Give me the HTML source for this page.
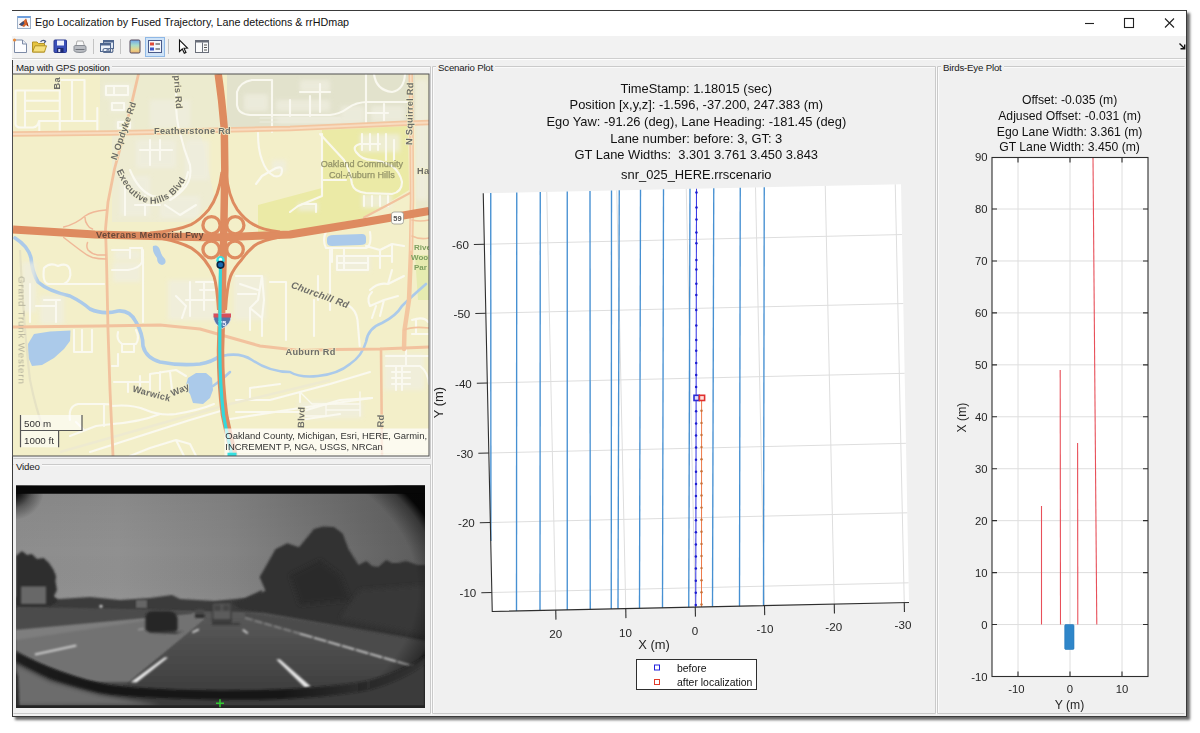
<!DOCTYPE html>
<html lang="en">
<head>
<meta charset="utf-8">
<title>Ego Localization by Fused Trajectory, Lane detections &amp; rrHDmap</title>
<style>
html,body{margin:0;padding:0;background:#fff;}
body{width:1200px;height:733px;position:relative;overflow:hidden;font-family:"Liberation Sans",sans-serif;color:#222;}
#win{position:absolute;left:11.5px;top:10px;width:1173.5px;height:705px;border:1px solid #3a3a3a;background:#f0f0f0;box-shadow:2.500px 2.500px 2.500px rgba(0,0,0,.600);}
#titlebar{position:absolute;left:0;top:0;width:1174px;height:26px;background:#fff;}
#titletext{position:absolute;left:23px;top:5px;font-size:10.75px;line-height:14px;color:#111;white-space:pre;}
#toolbar{position:absolute;left:0;top:26px;width:1174px;height:22px;background:#f1f1f1;border-bottom:1px solid #d0d0d0;}
.abs{position:absolute;}
.ptitle{position:absolute;font-size:9.7px;letter-spacing:-0.2px;line-height:11px;color:#1a1a1a;background:#f0f0f0;padding:0 2px;white-space:pre;}
.panel{position:absolute;border:1px solid #d5d5d5;box-shadow:inset 1px 1px 0 #fff, 1px 1px 0 #fff;}
svg{position:absolute;left:0;top:0;overflow:visible;}
svg text{font-family:"Liberation Sans",sans-serif;}
</style>
</head>
<body>
<div id="win"></div>
<!-- title bar -->
<div class="abs" style="left:12px;top:11px;width:1174px;height:25px;background:#fff;"></div>
<svg width="1200" height="733" viewBox="0 0 1200 733" style="pointer-events:none">
  <!-- app icon -->
  <rect x="17.5" y="16.5" width="13" height="12" fill="#f4f6fa" stroke="#9db0c8" stroke-width="1"/>
  <rect x="17.5" y="16" width="13" height="2" fill="#6f9edb"/>
  <path d="M19 24.5 L23.5 21 L26 18.5 L28.5 26.5 L26 25 L24 27 Z" fill="#d9642a"/>
  <path d="M19 24.5 L23.5 21 L24.5 23.5 L22 26 Z" fill="#3a4f7a"/>
  <path d="M26 18.5 L28.5 26.5 L27 25.5 Z" fill="#8a2f16"/>
  <!-- window controls -->
  <path d="M1085 23.5 H1094" stroke="#222" stroke-width="1.1" fill="none"/>
  <rect x="1124.5" y="18.5" width="9" height="9" stroke="#222" stroke-width="1.1" fill="none"/>
  <path d="M1165 18.5 L1174 27.5 M1174 18.5 L1165 27.5" stroke="#222" stroke-width="1.1" fill="none"/>
</svg>
<div id="titletext" class="abs" style="left:35px;top:15px;">Ego Localization by Fused Trajectory, Lane detections &amp; rrHDmap</div>
<!-- toolbar -->
<div class="abs" style="left:12px;top:36px;width:1174px;height:22px;background:#f2f2f2;border-bottom:1px solid #cfcfcf;"></div>
<div class="abs" style="left:12px;top:59px;width:1174px;height:1px;background:#fdfdfd;"></div>
<svg width="1200" height="733" viewBox="0 0 1200 733" style="pointer-events:none">
  <!-- new file -->
  <path d="M14.5 40 H22.5 L26.5 44 V52.5 H14.5 Z" fill="#fdfdff" stroke="#7d8ba6" stroke-width="1"/>
  <path d="M22.5 40 V44 H26.5" fill="#e8ecf5" stroke="#7d8ba6" stroke-width="1"/>
  <circle cx="14.5" cy="40" r="1.6" fill="#e88a3a"/>
  <!-- open folder -->
  <path d="M32.500 42 H37 L38.500 43.500 H44.500 V52 H32.500 Z" fill="#e6c440" stroke="#b39326" stroke-width="1"/>
  <path d="M32.500 52 L35 45.800 H46.500 L44.500 52 Z" fill="#f5df7c" stroke="#b39326" stroke-width="1"/>
  <path d="M40.500 41.800 Q43 39.300 45.500 41.300 L44.300 43" fill="none" stroke="#4a5a80" stroke-width="1.300"/>
  <!-- save -->
  <rect x="54" y="40" width="12.5" height="12.5" rx="1" fill="#3a4fb8" stroke="#2b3990" stroke-width="1"/>
  <rect x="57" y="40.5" width="7" height="5" fill="#eef1fb"/>
  <rect x="57" y="48" width="6.5" height="4.5" fill="#1d2870"/>
  <rect x="58.3" y="49" width="2" height="3" fill="#dfe3f5"/>
  <!-- print -->
  <path d="M77 41 H83 L84.5 46 H76 Z" fill="#f7f7f7" stroke="#9a9a9a" stroke-width="0.8"/>
  <path d="M74 46.5 Q74 45.5 76 45.5 H84 Q86 45.5 86 47 V50.5 Q86 52.5 80 52.5 Q74 52.5 74 50.5 Z" fill="#b9bcc2" stroke="#80848c" stroke-width="0.9"/>
  <path d="M75.5 49.5 H84.5" stroke="#6f737b" stroke-width="1"/>
  <!-- separator -->
  <path d="M93.5 39 V54" stroke="#c4c4c4" stroke-width="1"/>
  <!-- link plot -->
  <rect x="103.5" y="40.5" width="10" height="8" fill="#dfe8f5" stroke="#4f678f" stroke-width="1"/>
  <rect x="103.5" y="40.5" width="10" height="2" fill="#4f678f"/>
  <rect x="100.5" y="43.5" width="10" height="8" fill="#eef3fa" stroke="#4f678f" stroke-width="1"/>
  <rect x="100.5" y="43.5" width="10" height="2" fill="#4f678f"/>
  <path d="M103 50.5 Q103 48.5 105 48.5 H107 Q109 48.5 109 50.5 Q109 52.5 107 52.5 H105 Q103 52.5 103 50.5 Z M107 50.5 Q107 48.5 109 48.5 H111 Q113 48.5 113 50.5 Q113 52.5 111 52.5 H109 Q107 52.5 107 50.5 Z" fill="none" stroke="#5b6f92" stroke-width="1.1"/>
  <!-- separator -->
  <path d="M120.5 39 V54" stroke="#c4c4c4" stroke-width="1"/>
  <!-- colorbar -->
  <defs><linearGradient id="cbg" x1="0" y1="0" x2="0" y2="1">
    <stop offset="0" stop-color="#6fa4ea"/><stop offset="0.400" stop-color="#a8dcc8"/><stop offset="0.750" stop-color="#ead488"/><stop offset="1" stop-color="#e8b070"/></linearGradient></defs>
  <rect x="130" y="40" width="10" height="13" rx="1.2" fill="url(#cbg)" stroke="#54495a" stroke-width="1"/>
  <!-- legend (selected) -->
  <rect x="145.5" y="37.5" width="19" height="19" fill="#cfe3f7" stroke="#8fb8e6" stroke-width="1"/>
  <rect x="148.500" y="40.5" width="13" height="12" fill="#f4f6fb" stroke="#4a5a8a" stroke-width="1"/>
  <rect x="150" y="42.5" width="4" height="3" fill="#e04a3a"/>
  <rect x="150" y="47.5" width="4" height="3" fill="#3a55c8"/>
  <path d="M155.500 44 H160 M155.500 49 H160" stroke="#333" stroke-width="1.2"/>
  <!-- separator -->
  <path d="M168.500 39 V54" stroke="#c4c4c4" stroke-width="1"/>
  <!-- arrow cursor -->
  <path d="M179.500 40 V51.500 L182.300 49 L184.300 53.300 L186 52.500 L184 48.300 L187.500 48 Z" fill="#fff" stroke="#111" stroke-width="1.1" stroke-linejoin="miter"/>
  <!-- property inspector -->
  <rect x="195.500" y="40.500" width="13" height="12" fill="#fbfbfb" stroke="#6a6f7a" stroke-width="1"/>
  <rect x="195.500" y="40.500" width="13" height="2" fill="#6a6f7a"/>
  <path d="M202.500 42.500 V52.500" stroke="#6a6f7a" stroke-width="1"/>
  <path d="M204 45 H207 M204 47.500 H207 M204 50 H207" stroke="#555" stroke-width="1"/>
  <!-- dock arrow -->
  <path d="M1179.500 43.500 L1184 48 M1184.700 44.500 V48.700 H1180.500" stroke="#111" stroke-width="1.400" fill="none"/>
</svg>
<svg width="1200" height="733" viewBox="0 0 1200 733" style="pointer-events:none">
  <g fill="none" stroke-width="1">
    <!-- etched panel borders: grey line + white highlight -->
    <g stroke="#fafafa">
      <path d="M14.500 67.500 H431.500 V459.500"/>
      <path d="M14.500 465.500 H431.500 V714.500"/>
      <path d="M433.500 714.500 V67.500 H936.500 V714.500"/>
      <path d="M938.500 714.500 V67.500 H1185"/>
    </g>
    <g stroke="#cacaca">
      <path d="M13.500 66.500 H430.500 V458.500 H13.500"/>
      <path d="M13.500 464.500 H430.500 V713.500 H13.500"/>
      <path d="M432.500 713.500 V66.500 H935.500 V713.500 Z"/>
      <path d="M937.500 713.500 V66.500 H1184.500 M937.500 713.500 H1184.500"/>
    </g>
  </g>
</svg>
<div class="ptitle" style="left:14px;top:62px;">Map with GPS position</div>
<div class="ptitle" style="left:14px;top:461px;">Video</div>
<div class="ptitle" style="left:436px;top:62px;">Scenario Plot</div>
<div class="ptitle" style="left:941px;top:62px;">Birds-Eye Plot</div>
<svg width="1200" height="733" viewBox="0 0 1200 733">
<defs>
  <clipPath id="mapclip"><rect x="13" y="74" width="416" height="382"/></clipPath>
  <filter id="pblur" x="-20%" y="-20%" width="140%" height="140%"><feGaussianBlur stdDeviation="2.200"/></filter>
  <filter id="mblur" x="-5%" y="-5%" width="110%" height="110%"><feGaussianBlur stdDeviation="0.45"/></filter>
</defs>
<g clip-path="url(#mapclip)">
<g filter="url(#mblur)">
  <rect x="13" y="74" width="416" height="382" fill="#f3efc9"/>
  <!-- developed / grey areas -->
  <path d="M227 74 H429 V124 L227 130 Z" fill="#e2e2cc"/>
  <path d="M100 74 H214 L221 131 L100 134 Z" fill="#ecebcf"/>
  <path d="M112 134 L200 131 L215 200 L190 222 L112 222 Z" fill="#eeecd2"/>
  <path d="M415 74 H429 V215 H416 Z" fill="#ebe9cc"/>
  <!-- park / campus -->
  <path d="M322 130 L408 126 L409 190 L364 218 L300 230 L258 232 L258 205 L322 188 Z" fill="#ebeaa6"/>
  <path d="M415 255 H429 V300 H418 Z" fill="#e6ebb0"/>
  <!-- water -->
  <g fill="#abcaea">
    <path d="M70.500 330.500 L50 331.500 L34 334 L28 344 L28.500 358 L32 366 L42 365 L54 358 L64 349 L70 341 Z"/>
    <path d="M188 378 L196 373 L206 373 L212 378 L213 390 L210 398 L203 404 L193 403 L190 394 L185 388 Z"/>
    <path d="M327 239 Q327 235 334 235 L362 234 Q366 234 366 238 L366 242 Q366 245 360 245 L332 246 Q327 246 327 242 Z"/>
    <path d="M153 246 Q158 244 160 250 Q161 255 165 259 Q167 264 162 265 Q157 264 157 258 Q152 252 153 246 Z"/>
  </g>
  <g fill="none" stroke="#abcaea" stroke-linecap="round" stroke-linejoin="round">
    <path d="M15 238 Q28 246 31 258 Q32 272 38 282 Q48 291 70 296 Q82 302 90 309 Q103 315 118 311 Q130 310 136 322 Q143 334 143 346 Q146 358 160 362 Q180 366 200 364 Q212 362 220 356" stroke-width="3.600"/>
    <path d="M222 356 Q240 352 252 360 Q270 372 290 372 Q300 378 318 376 Q338 374 350 364 Q362 356 366 342 Q368 328 382 323 Q396 316 402 306 Q410 298 426 284" stroke-width="2.600"/>
    <path d="M213 386 Q222 380 230 372" stroke-width="2.500"/>
  </g>
  <!-- parking lots / building clusters -->
  <g fill="#efeee0" opacity="0.750" filter="url(#pblur)">
    <rect x="244" y="94" width="24" height="17"/><rect x="276" y="100" width="54" height="11"/><rect x="276" y="116" width="68" height="8"/>
    <rect x="341" y="106" width="24" height="18"/><rect x="371" y="106" width="34" height="16"/><rect x="300" y="80" width="30" height="12"/>
    <rect x="104" y="84" width="28" height="14"/><rect x="110" y="100" width="18" height="12"/><rect x="116" y="120" width="16" height="10"/>
    <rect x="136" y="140" width="40" height="28"/><rect x="150" y="100" width="40" height="28"/><rect x="185" y="140" width="24" height="40"/>
    <rect x="120" y="176" width="30" height="40"/><rect x="160" y="196" width="40" height="22"/>
    <rect x="113" y="262" width="28" height="20"/><rect x="114" y="250" width="27" height="10"/>
    <rect x="360" y="134" width="40" height="18"/><rect x="362" y="194" width="30" height="14"/>
    <rect x="272" y="160" width="14" height="12"/><rect x="298" y="203" width="20" height="8"/>
    <rect x="336" y="256" width="34" height="15"/><rect x="384" y="354" width="40" height="36"/>
    <rect x="298" y="402" width="64" height="16"/><rect x="416" y="80" width="12" height="120"/>
    <rect x="22" y="262" width="14" height="50"/><rect x="40" y="296" width="24" height="28"/>
    <rect x="168" y="280" width="48" height="40"/><rect x="234" y="276" width="32" height="44"/>
  </g>
  <!-- local streets -->
  <g fill="none" stroke="#fbfaf2" stroke-width="2.100" stroke-linecap="round" stroke-linejoin="round" opacity="0.930">
    <path d="M15.500 90.500 H59.500 M25 100.700 H59.500 M25 111 H59.500 M25 90.500 V126 M15.500 90.500 V124 Q16 128 22 127.500 H33 Q38 127 39 121 H97.500 M59.800 78 V133 M59.800 80 H84.500 V120 M72 80 V120 M97.300 108 V131 M39.300 121 V133"/>
    <path d="M106 86 H128 V95 H106 Z M114 86 V95 M112 103 H124 V110 H112 Z M118 122 H130 V128 H118 Z"/>
    <path d="M176 74 V100 Q176 120 180 133 Q184 150 190 165 Q192 178 186 186 Q180 194 170 200"/>
    <path d="M130 170 Q138 190 152 196 Q168 200 180 190 Q186 182 188 172"/>
    <path d="M140 150 H172 M150 140 V165 M160 140 V160 M135 205 H160 M145 196 V215 M125 180 V215 M165 205 L180 215 L196 205"/>
    <path d="M252 80 Q240 82 237 92 V105 Q238 114 250 115 H330 Q340 114 348 108 Q356 102 368 102 H408"/>
    <path d="M272 80 V132 M366 74 V125 M252 80 H272 M300 92 H330 M290 100 V116 M310 96 V116 M384 104 V120 M366 113 H388 M320 84 V112"/>
    <path d="M374 74 Q376 90 392 92 Q404 90 405 74"/>
    <path d="M260 118 H340 M260 122 H340" stroke-width="1.100" stroke="#eeeee0"/>
    <path d="M258 133 Q258 150 262 160 Q266 172 274 176 Q282 178 282 170 Q282 166 276 168 L262 176 L256 184"/>
    <path d="M320 134 L344 160 Q350 170 352 184 Q354 192 366 193 L392 194 Q402 192 402 182 Q400 172 392 166 Q380 160 372 160 Q362 160 356 152 Q352 146 360 144 L380 144"/>
    <path d="M322 134 V196 L298 206 L290 212 M322 180 H346 M302 204 L316 204 L316 212"/>
    <path d="M362 134 V150 M370 134 V150 M378 134 V150 M386 134 V160 M394 140 V160"/>
    <path d="M364 196 V206 M372 196 V206 M380 196 V206 M388 196 V206"/>
    <path d="M326 232 Q322 240 326 248 H366 Q372 246 370 232 M332 248 V262 M344 248 V270 M366 246 L380 250 L392 244 L404 246 M392 244 V262 M380 250 V268 M356 256 H392"/>
    <path d="M337 256 H368 V270 H337 Z M337 263 H368"/>
    <path d="M370 290 Q378 282 388 284 L404 276 M372 292 Q366 298 370 306 L384 300 L398 296 M384 300 L380 316 M388 284 L392 270 M376 306 L372 318"/>
    <path d="M412 320 Q424 316 428 322 M412 334 H428 M416 320 V334"/>
    <path d="M196 282 H216 M200 290 H214 M186 300 H214 M190 282 V316 M204 282 V310 M176 296 L186 306 L182 318"/>
    <path d="M236 276 H262 L258 300 L250 308 V330 M240 284 L258 290 M238 294 H256 M262 276 L264 300 L262 318 M270 282 H286 V340 M250 308 L262 318 L262 336"/>
    <path d="M330 250 V310 M318 276 V300 M314 300 V336 M348.500 305.500 Q356 310 357.500 320 L359.700 346"/>
    <path d="M130 248 H142 V262 Q140 268 128 270 H112 M112 250 H130 V258 M143 250 V322"/>
    <path d="M44 268 Q50 262 58 266 Q68 262 70 270 Q72 280 64 284 H48 Q42 282 44 268 M64 284 H104"/>
    <path d="M30 284 V322 M44 300 H60 M56 300 V322 M36 306 H56"/>
    <path d="M74 330 V352 H92 V330 M82 330 V352 M118 332 Q116 340 122 344 H136 Q140 338 136 330 M122 344 V352 H134 V344"/>
    <path d="M112 366 H118 V354 M114 382 H150 M128 382 V392 M140 376 V392 M150 374 V392 M160 372 V390 M170 372 L172 390 M150 374 L176 370 L186 376"/>
    <path d="M70 420 Q68 406 78 404 H104 Q112 404 112 406 M104 404 V426 M112 406 Q132 404 146 410 Q160 416 176 414 Q200 410 214 404"/>
    <path d="M70 436 L96 426 L112 424 Q140 422 160 414 M76 422 L84 430"/>
    <path d="M90 452 L140 436 L190 420 L224 410 M130 456 L150 448 L176 440 L190 444 L196 456 M176 440 L184 456"/>
    <path d="M236 400 H270 L300 392 L330 384 L370 372 M250 400 V388 L280 384 M300 392 V402 M236 412 H300 L340 400 L372 398"/>
    <path d="M300 392 L312 404 H360 M326 404 V416 H300 M360 392 V416 M326 410 H360" stroke-width="1.400"/>
    <path d="M386 356 H428 M386 366 H420 Q428 372 429 384 M406 350 V366 M392 372 H410 M392 378 H410 M392 384 H410 M396 366 V390 M402 366 V390"/>
    <path d="M224 420 L300 408 L372 398 M300 420 L340 414"/>
  </g>
  <!-- rail line (faint) -->
  <path d="M20 250 Q24 330 30 380 Q36 410 44 430" fill="none" stroke="#e6e2c4" stroke-width="2.200"/>
  <path d="M60 452 L230 404 L330 380" fill="none" stroke="#eeead0" stroke-width="2.500"/>
  <!-- minor arterials -->
  <g fill="none" stroke-linecap="round" stroke-linejoin="round">
    <g stroke="#f3c6a0">
      <path d="M13 134 L110 133 L160 132 L222 130 L290 128.500 L400 123.500 L429 122.500" stroke-width="5.500"/>
      <path d="M410.700 74 L411.500 130 L412 200 L411 250 L409 300 Q406 320 404.500 330 L404 349" stroke-width="4.500"/>
    </g>
    <g stroke="#f8dcc0">
      <path d="M13 134 L110 133 L160 132 L222 130 L290 128.500 L400 123.500 L429 122.500" stroke-width="2"/>
      <path d="M410.700 74 L411.500 130 L412 200 L411 250" stroke-width="1.500"/>
    </g>
    <g stroke="#f2c29e">
      <path d="M138.500 74 L131 106 L124 134 L114.500 169 L108 202 L105.500 229 L106.500 260 L108 330 L110 390 L113 456" stroke-width="2.800"/>
      <path d="M13 327 L100 326 L160 325 L200 329 L260 346 L300 350.500 L335 349.500 L380 349 L429 347" stroke-width="3"/>
      <path d="M381 349 L381.500 400 L382 456" stroke-width="2.600"/>
      <path d="M364 217.500 Q386 206 410 193" stroke-width="2"/>
      <path d="M63.700 227 Q76 224 85 216 Q92 211 106 210 M85 217.500 Q85 222 87.500 225 Q89 228 92.500 229 M63.700 237.500 Q72 244 80 250 Q86 255 92.500 257.500 Q98 259 106 259 M87.500 242.500 Q86 247 88 250 Q92 254 97.500 255 L106 255" stroke-width="1.500" stroke="#f0b898"/>
      <path d="M412 220 Q420 222 429 220 M412 236 Q420 240 429 238 M404 330 Q412 326 429 328" stroke-width="1.600"/>
    </g>
  </g>
  <!-- highways -->
  <g fill="none" stroke="#de8b60" stroke-linecap="butt" stroke-linejoin="round">
    <path d="M218.200 74 Q222 100 224.300 129 L224.800 170 L223.700 237 L222 300 L220.500 350 Q220.500 385 224.500 415 Q228 432 234 456" stroke-width="7.500"/>
    <path d="M13 229.400 L95 234.400 L160 236.300 L202 237.300 L224 237.300 L290 234.500 L360 223 L429 211" stroke-width="8"/>
    <!-- cloverleaf loops -->
    <circle cx="211.500" cy="225.200" r="8.600" stroke-width="3.300"/>
    <circle cx="235.300" cy="225.200" r="8.600" stroke-width="3.300"/>
    <circle cx="211.200" cy="249.500" r="8.300" stroke-width="3.300"/>
    <circle cx="235" cy="249.500" r="8.300" stroke-width="3.300"/>
    <!-- outer ramps -->
    <path d="M222 172 Q219 196 208.700 209.600 Q200 220 191 224.600 Q176 231 150 233" stroke-width="3"/>
    <path d="M226 172 Q228 196 237.300 209.600 Q245 220 253.700 224.600 Q262 230 280 232" stroke-width="3"/>
    <path d="M160 238 Q180 242 191 247.800 Q200 254 204.600 260 Q211 268 214 276.400 Q217 286 218.500 310" stroke-width="3"/>
    <path d="M280 237 Q262 240 254 246 Q246 253 241.400 260 Q234 268 230.500 276.400 Q227 286 225.500 310" stroke-width="3"/>
  </g>
</g>
</g>
</svg>
<svg width="1200" height="733" viewBox="0 0 1200 733">
<g clip-path="url(#mapclip)">
 <g filter="url(#mblur)">
  <!-- road labels -->
  <g font-weight="bold" fill="#6d6d68" font-size="9.200" stroke="#f3efc9" stroke-width="1.400" paint-order="stroke" stroke-linejoin="round" letter-spacing="0.300">
    <text x="154" y="134.200">Featherstone Rd</text>
    <text x="96" y="238.300" fill="#6b4a3a" stroke="none">Veterans Memorial Fwy</text>
    <text transform="translate(116.500 160.500) rotate(-71)">N Opdyke Rd</text>
    <text transform="translate(412.200 145) rotate(-89)">N Squirrel Rd</text>
    <text transform="translate(290.500 287.500) rotate(20)" font-style="italic" font-size="9.600">Churchill Rd</text>
    <text x="285.500" y="354.500">Auburn Rd</text>
    <text transform="translate(132 391.500) rotate(15)">Warwick</text>
    <text transform="translate(172.500 396.500) rotate(-24)">Way</text>
    <text transform="translate(60.300 89.500) rotate(-90)">Ba</text>
    <text transform="translate(173.800 75.500) rotate(86)">pris Rd</text>
    <text x="417" y="173.500" >Har</text>
    <text transform="translate(304 428) rotate(-88)">Blvd</text>
    <text transform="translate(383.500 427.500) rotate(-88)">Rd</text>
  </g>
  <!-- curved label: Executive Hills Blvd -->
  <path id="exec" d="M116.500 171 Q132 206 156 203.500 Q180 198 190 169" fill="none"/>
  <text font-weight="bold" fill="#6d6d68" font-size="9.200" stroke="#f1eed0" stroke-width="1.400" paint-order="stroke" letter-spacing="0.350"><textPath href="#exec" startOffset="0">Executive Hills Blvd</textPath></text>
  <g fill="#94946a" font-size="9.100" stroke="#94946a" stroke-width="0.250">
    <text x="320.700" y="167.200">Oakland Community</text>
    <text x="329" y="177.700">Col-Auburn Hills</text>
  </g>
  <g fill="#7fa060" font-size="8" font-weight="bold">
    <text x="414" y="250">Rive</text><text x="411" y="260">Woo</text><text x="414" y="270">Par</text>
  </g>
  <text transform="translate(18.500 276) rotate(90)" fill="#b4b19c" font-size="9.800" letter-spacing="0.800">Grand Trunk Western</text>
  <!-- shields -->
  <rect x="391.500" y="212" width="12" height="12" rx="2.500" fill="#fdfdf8" stroke="#9a9a90" stroke-width="0.800"/>
  <text x="397.500" y="221" font-size="7.500" fill="#555" text-anchor="middle" font-weight="bold">59</text>
  <path d="M213.500 313.500 H231 V316 Q231.500 324 222.300 328.500 Q213 324 213.500 316 Z" fill="#5676a8" stroke="#e8e8ee" stroke-width="0.800"/>
  <path d="M213.500 313.500 H231 V317.500 H213.500 Z" fill="#d8505a"/>
  <text x="222.300" y="326" font-size="7.500" fill="#eef" text-anchor="middle" font-weight="bold">75</text>
 </g>
  <!-- trajectory -->
  <path d="M220.500 262 L220 300 L219.800 350 Q220 385 223.500 415 Q226.500 432 232 456" fill="none" stroke="#33d9dc" stroke-width="3.200" stroke-linecap="butt"/>
  <circle cx="220.500" cy="260.300" r="4.200" fill="#35e0e0"/>
  <circle cx="220.500" cy="259.500" r="1.700" fill="#e8ffff"/>
  <circle cx="220.500" cy="264.800" r="3.300" fill="#1668b0" stroke="#0b2540" stroke-width="1.600"/>
  <!-- attribution -->
  <rect x="224.500" y="428.500" width="205" height="25" fill="#fff" fill-opacity="0.700"/>
  <rect x="224.500" y="453.500" width="205" height="3" fill="#fff" fill-opacity="0.700"/>
  <rect x="227.500" y="452.700" width="9" height="3.300" fill="#35e0e0"/>
  <g font-size="9.450" fill="#333">
    <text x="225.300" y="438.700">Oakland County, Michigan, Esri, HERE, Garmin,</text>
    <text x="225.300" y="450.200">INCREMENT P, NGA, USGS, NRCan</text>
  </g>
  <!-- scale bar -->
  <rect x="20.500" y="415" width="61.500" height="15.500" fill="#fff" fill-opacity="0.600"/>
  <rect x="20.500" y="430.500" width="38" height="16.800" fill="#fff" fill-opacity="0.600"/>
  <path d="M20.500 415 V447.300 M20.500 430.500 H82 V415 M58.600 430.500 V447.300" fill="none" stroke="#555" stroke-width="1.200"/>
  <g font-size="9.800" fill="#333"><text x="24" y="427">500 m</text><text x="24" y="443.500">1000 ft</text></g>
</g>
<rect x="12.500" y="74" width="416.500" height="382" fill="none" stroke="#4f4f4f" stroke-width="1"/>
</svg>
<svg width="1200" height="733" viewBox="0 0 1200 733">
<defs>
  <clipPath id="vidclip"><rect x="16" y="485.500" width="409" height="222.500"/></clipPath>
  <linearGradient id="skyh" x1="16" y1="0" x2="425" y2="0" gradientUnits="userSpaceOnUse">
    <stop offset="0" stop-color="#8d8d8d"/><stop offset="0.250" stop-color="#909090"/><stop offset="0.520" stop-color="#848484"/><stop offset="0.770" stop-color="#707070"/><stop offset="1" stop-color="#5c5c5c"/>
  </linearGradient>
  <linearGradient id="skyv" x1="0" y1="493" x2="0" y2="610" gradientUnits="userSpaceOnUse">
    <stop offset="0" stop-color="#000" stop-opacity="0.050"/><stop offset="0.500" stop-color="#000" stop-opacity="0"/><stop offset="1" stop-color="#fff" stop-opacity="0.050"/>
  </linearGradient>
  <linearGradient id="roadg" x1="0" y1="605" x2="0" y2="700" gradientUnits="userSpaceOnUse">
    <stop offset="0" stop-color="#585858"/><stop offset="0.600" stop-color="#4e4e4e"/><stop offset="1" stop-color="#444"/>
  </linearGradient>
  <linearGradient id="egog" x1="0" y1="612" x2="0" y2="700" gradientUnits="userSpaceOnUse">
    <stop offset="0" stop-color="#5a5a5a"/><stop offset="0.450" stop-color="#4c4c4c"/><stop offset="1" stop-color="#3c3c3c"/>
  </linearGradient>
  <linearGradient id="bandg" x1="16" y1="0" x2="425" y2="0" gradientUnits="userSpaceOnUse">
    <stop offset="0" stop-color="#161616" stop-opacity="0.850"/><stop offset="0.200" stop-color="#161616" stop-opacity="1"/><stop offset="0.650" stop-color="#161616" stop-opacity="1"/><stop offset="0.850" stop-color="#1c1c1c" stop-opacity="0.500"/><stop offset="1" stop-color="#222" stop-opacity="0.300"/>
  </linearGradient>
  <radialGradient id="tlc" cx="14" cy="490" r="30" gradientUnits="userSpaceOnUse">
    <stop offset="0.200" stop-color="#000" stop-opacity="0.850"/><stop offset="0.600" stop-color="#000" stop-opacity="0.350"/><stop offset="1" stop-color="#000" stop-opacity="0"/>
  </radialGradient>
  <radialGradient id="vig" cx="200" cy="590" r="1" gradientUnits="userSpaceOnUse" gradientTransform="translate(200 590) scale(250 170) translate(-200 -590)">
    <stop offset="0.870" stop-color="#000" stop-opacity="0"/><stop offset="0.960" stop-color="#000" stop-opacity="0.400"/><stop offset="1.060" stop-color="#000" stop-opacity="0.930"/>
  </radialGradient>
  <filter id="vb1" x="-5%" y="-5%" width="110%" height="110%"><feGaussianBlur stdDeviation="0.800"/></filter>
  <filter id="vb2" x="-10%" y="-10%" width="120%" height="120%"><feGaussianBlur stdDeviation="2.200"/></filter>
  <filter id="vb3" x="-10%" y="-10%" width="120%" height="120%"><feGaussianBlur stdDeviation="1.300"/></filter>
</defs>
<g clip-path="url(#vidclip)">
  <rect x="16" y="485" width="409" height="223" fill="#0c0c0c"/>
  <!-- sky -->
  <rect x="16" y="493.500" width="409" height="125" fill="url(#skyh)"/>
  <rect x="16" y="493.500" width="409" height="125" fill="url(#skyv)"/>
  <!-- road base -->
  <path d="M16 606 H425 V707 H16 Z" fill="url(#roadg)"/>
  <!-- lighter concrete lanes on left -->
  <path d="M16 628 L146 617 L205 612 L205 619.600 L129.700 682 L16 682 Z" fill="#727272" filter="url(#vb1)"/>
  <path d="M16 629 L146 617.500 L150 620 L16 640 Z" fill="#7e7e7e" filter="url(#vb1)"/>
  <!-- ego lane asphalt -->
  <path d="M205 612 L240 612 L425 672 V707 H100 L129.700 682 L205 619.600 Z" fill="url(#egog)" filter="url(#vb1)"/>
  <!-- right shoulder / verge -->
  <path d="M245 612 L425 640 V668 L245 617 Z" fill="#4c4c4c" filter="url(#vb1)"/>
  <!-- distant tree line -->
  <path d="M16 597 L60 599 L90 597 L120 600 L150 598 L172 595 L180 599 L215 601 L245 598 L262 590 L262 612 L16 609 Z" fill="#3a3a3a" filter="url(#vb1)"/>
  <rect x="136" y="600" width="11" height="8" fill="#666" filter="url(#vb1)"/>
  <!-- barrier wall -->
  <path d="M16 606.700 L146 609.500 L192 611.500 L192 613.500 L146 617.800 L16 629.700 Z" fill="#4b4b4b" filter="url(#vb1)"/>
  <!-- left trees -->
  <path d="M16 556 L21.900 551 L27 555 L31.800 554 L37 559 L43.600 557.900 L49 563 L53.500 569.700 L56 576 L55.500 581.600 L57 590 L54 596 L58 601 L50 606 H16 Z" fill="#2d2d2d" filter="url(#vb3)"/>
  <path d="M21 586.400 H46 V604 H21 Z" fill="#686868" filter="url(#vb1)"/>
  <!-- right trees -->
  <path d="M231.900 602.600 L245.700 598.700 L265.500 590.800 L259.600 577 L266 566 L275.400 549.200 L287.300 543.300 L299 547.300 L307 537.400 L314 529 L322.900 526.500 L334 527 L342.700 533.400 L348.600 549.200 L358.500 565 L366.400 561 L372 566 L378.300 567 L386.200 560 L392 563 L398 563 L406 561 L417.800 565 H426 V641 L265 613 L240 609 Z" fill="#333" filter="url(#vb3)"/>
  <path d="M290 575 L320 560 L340 575 L350 600 L300 605 Z" fill="#2a2a2a" filter="url(#vb2)"/>
  <path d="M360 590 L425 585 V635 L340 618 Z" fill="#393939" filter="url(#vb2)"/>
  <!-- lane markings -->
  <g filter="url(#vb1)">
    <path d="M130.600 682.200 L164.700 657.300 L168 657.600 L136.500 682.400 Z" fill="#ececec"/>
    <path d="M276.300 659.600 L279.800 659.300 L310.800 686.600 L305 687.400 Z" fill="#e8e8e8"/>
    <path d="M34.900 654.600 L76.300 645.400" stroke="#cfcfcf" stroke-width="2" fill="none"/>
    <path d="M192.300 632.500 L198.800 629.400" stroke="#d8d8d8" stroke-width="1.800" fill="none"/>
    <path d="M242.800 629.700 L247.800 633.400" stroke="#d8d8d8" stroke-width="1.800" fill="none"/>
    <path d="M138 629.800 L144 628.700" stroke="#9a9a9a" stroke-width="1.400" fill="none"/>
    <path d="M245 617.800 L300 633.700" stroke="#9a9a9a" stroke-width="1.200" stroke-dasharray="8 2" fill="none"/>
    <path d="M300 633.700 L414.400 666.600" stroke="#d2d2d2" stroke-width="1.700" stroke-dasharray="13 1.500" fill="none"/>
  </g>
  <!-- vehicles -->
  <g filter="url(#vb1)">
    <path d="M146 630 L178 632 L184 631 L176 634 L150 633 Z" fill="#3a3a3a"/>
    <path d="M145.400 617 Q146 612 152 611.300 H170 Q176 612 177.600 618 V629 Q177 631.600 172 631.600 H150 Q145.400 631.600 145.400 628 Z" fill="#282828"/>
    <rect x="195" y="609.500" width="9.800" height="8.300" rx="1.500" fill="#4a4a4a"/>
    <rect x="195" y="614.500" width="9.800" height="3.300" fill="#2c2c2c"/>
    <rect x="211.800" y="602.500" width="20.100" height="21.300" rx="2" fill="#3c3c3c"/>
    <rect x="213.300" y="604" width="17" height="15" rx="1" fill="#5c5c5c"/>
    <rect x="214.300" y="605" width="6.700" height="6" fill="#454545"/>
    <rect x="222.600" y="605" width="6.700" height="6" fill="#454545"/>
    <path d="M212 624 H240" stroke="#333" stroke-width="1.500"/>
    <circle cx="101" cy="606.300" r="1.400" fill="#f4f4f4"/>
  </g>
  <rect x="16" y="485" width="409" height="223" fill="url(#vig)"/>
  <rect x="16" y="490" width="34" height="34" fill="url(#tlc)"/>
  <!-- lens edge / dashboard -->
  <path d="M16 653.700 L46.800 666.500 L83.700 679.400 L107.600 686 L139 688.700 L194 690.500 L260 691 L310 688.700 L357.300 685 L394 674 L414.400 664.700 L425 657.300 V709 H16 Z" fill="#3a3a3a" filter="url(#vb3)"/>
  <path d="M16 651 Q60 676 110 685 Q170 692 260 690 Q330 688 370 680 Q405 670 425 655 L425 664 Q405 680 370 690 Q330 698 260 699.700 Q170 700 110 695 Q60 688 16 662 Z" fill="url(#bandg)" filter="url(#vb3)"/>
  <path d="M16 664 L50 681 L100 695 L160 705 L16 706 Z" fill="#6c6c6c" filter="url(#vb2)"/>
  <path d="M14 668 L18 676 L19.500 710 H14 Z" fill="#2c2c2c" filter="url(#vb3)"/>
  <rect x="16" y="705.300" width="409" height="3" fill="#242424"/>
  <!-- vignette -->
  <rect x="16" y="485.500" width="409" height="8" fill="#070707"/>
  <!-- green plus -->
  <path d="M216 703.300 H224 M220 699.300 V707.300" stroke="#32c832" stroke-width="1.500" fill="none"/>
</g>
</svg>
<svg width="1200" height="733" viewBox="0 0 1200 733">
<polygon points="483.25,193.25 901.0,184.25 909.0,602.5 492.25,611.5" fill="#fff"/>
<g stroke="#dedede" stroke-width="1" fill="none">
<path d="M484.35 244.25 L901.96 234.55"/>
<path d="M485.83 313.25 L903.28 303.55"/>
<path d="M487.33 383.00 L904.62 373.30"/>
<path d="M488.84 453.00 L905.95 443.30"/>
<path d="M490.33 522.50 L907.28 512.80"/>
<path d="M491.84 592.50 L908.62 582.80"/>
<path d="M546.75 191.88 L555.75 610.13"/>
<path d="M616.75 190.37 L625.75 608.62"/>
<path d="M686.25 188.88 L695.25 607.12"/>
<path d="M755.50 187.38 L764.50 605.62"/>
<path d="M825.25 185.88 L834.25 604.11"/>
<path d="M895.25 184.37 L904.25 602.60"/>
</g>
<g stroke="#4690d2" stroke-width="1.35" fill="none">
<path d="M490.75 193.09 L490.9 541"/>
<path d="M516.75 192.53 L516.50 610.98"/>
<path d="M540.25 192.02 L540.00 610.47"/>
<path d="M567.25 191.44 L567.25 609.88"/>
<path d="M590.00 190.95 L590.25 609.38"/>
<path d="M611.50 190.49 L611.25 608.93"/>
<path d="M619.25 190.32 L618.00 608.78"/>
<path d="M640.50 189.86 L639.50 608.32"/>
<path d="M663.50 189.37 L662.50 607.82"/>
<path d="M690.00 188.80 L688.75 607.26"/>
<path d="M713.75 188.28 L712.50 606.74"/>
<path d="M740.25 187.71 L739.50 606.16"/>
<path d="M764.25 187.20 L763.50 605.64"/>
</g>
<path d="M696.5 188.66 L695.75 607.11" stroke="#3a3ae4" stroke-width="1.05" fill="none"/>
<g fill="#1c1cd0">
<circle cx="696.49" cy="192.50" r="1.25"/>
<circle cx="696.47" cy="207.50" r="1.25"/>
<circle cx="696.44" cy="219.50" r="1.25"/>
<circle cx="696.42" cy="232.50" r="1.25"/>
<circle cx="696.40" cy="243.25" r="1.25"/>
<circle cx="696.37" cy="260.00" r="1.25"/>
<circle cx="696.36" cy="269.50" r="1.25"/>
<circle cx="696.33" cy="283.75" r="1.25"/>
<circle cx="696.31" cy="295.00" r="1.25"/>
<circle cx="696.28" cy="310.00" r="1.25"/>
<circle cx="696.25" cy="325.50" r="1.25"/>
<circle cx="696.23" cy="340.00" r="1.25"/>
<circle cx="696.21" cy="350.80" r="1.25"/>
<circle cx="696.19" cy="362.90" r="1.25"/>
<circle cx="696.17" cy="375.00" r="1.25"/>
<circle cx="696.14" cy="387.10" r="1.25"/>
<circle cx="696.12" cy="399.20" r="1.25"/>
<circle cx="696.10" cy="411.30" r="1.25"/>
<circle cx="696.08" cy="423.40" r="1.25"/>
<circle cx="696.06" cy="435.50" r="1.25"/>
<circle cx="696.04" cy="447.60" r="1.25"/>
<circle cx="696.01" cy="459.70" r="1.25"/>
<circle cx="695.99" cy="471.80" r="1.25"/>
<circle cx="695.97" cy="483.90" r="1.25"/>
<circle cx="695.95" cy="496.00" r="1.25"/>
<circle cx="695.93" cy="508.10" r="1.25"/>
<circle cx="695.91" cy="520.20" r="1.25"/>
<circle cx="695.88" cy="532.30" r="1.25"/>
<circle cx="695.86" cy="544.40" r="1.25"/>
<circle cx="695.84" cy="556.50" r="1.25"/>
<circle cx="695.82" cy="568.60" r="1.25"/>
<circle cx="695.80" cy="580.70" r="1.25"/>
<circle cx="695.78" cy="592.80" r="1.25"/>
<circle cx="695.75" cy="604.90" r="1.25"/>
</g>
<path d="M701.6 398 L701.5 606.98" stroke="#ee7a4a" stroke-width="1.0" fill="none"/>
<g fill="#c87038">
<circle cx="701.50" cy="410.80" r="1.2"/>
<circle cx="701.50" cy="422.90" r="1.2"/>
<circle cx="701.50" cy="435.00" r="1.2"/>
<circle cx="701.50" cy="447.10" r="1.2"/>
<circle cx="701.50" cy="459.20" r="1.2"/>
<circle cx="701.50" cy="471.30" r="1.2"/>
<circle cx="701.50" cy="483.40" r="1.2"/>
<circle cx="701.50" cy="495.50" r="1.2"/>
<circle cx="701.50" cy="507.60" r="1.2"/>
<circle cx="701.50" cy="519.70" r="1.2"/>
<circle cx="701.50" cy="531.80" r="1.2"/>
<circle cx="701.50" cy="543.90" r="1.2"/>
<circle cx="701.50" cy="556.00" r="1.2"/>
<circle cx="701.50" cy="568.10" r="1.2"/>
<circle cx="701.50" cy="580.20" r="1.2"/>
<circle cx="701.50" cy="592.30" r="1.2"/>
<circle cx="701.50" cy="604.40" r="1.2"/>
</g>
<rect x="694.0" y="395.300" width="5.200" height="5.200" fill="#dcdcff" stroke="#2a2ad8" stroke-width="1.600"/>
<rect x="699.400" y="395.300" width="5.200" height="5.200" fill="#ffe0dc" stroke="#e03030" stroke-width="1.600"/>
<path d="M483.25 193.25 L492.25 611.5 L909.0 602.5" stroke="#2e2e2e" stroke-width="1.1" fill="none"/>
<g stroke="#2e2e2e" stroke-width="1.1" fill="none">
<path d="M473.85 244.50 L484.35 244.25"/>
<path d="M475.33 313.50 L485.83 313.25"/>
<path d="M476.83 383.25 L487.33 383.00"/>
<path d="M478.34 453.25 L488.84 453.00"/>
<path d="M479.83 522.75 L490.33 522.50"/>
<path d="M481.34 592.75 L491.84 592.50"/>
<path d="M555.75 610.13 L555.95 619.63"/>
<path d="M625.75 608.62 L625.95 618.12"/>
<path d="M695.25 607.12 L695.45 616.62"/>
<path d="M764.50 605.62 L764.70 615.12"/>
<path d="M834.25 604.11 L834.45 613.61"/>
<path d="M904.25 602.60 L904.45 612.10"/>
</g>
<g font-size="11.600" fill="#262626">
<text x="468.85" y="248.75" text-anchor="end">-60</text>
<text x="470.33" y="317.75" text-anchor="end">-50</text>
<text x="471.83" y="387.50" text-anchor="end">-40</text>
<text x="473.34" y="457.50" text-anchor="end">-30</text>
<text x="474.83" y="527.00" text-anchor="end">-20</text>
<text x="476.34" y="597.00" text-anchor="end">-10</text>
<text x="555.75" y="638.20" text-anchor="middle">20</text>
<text x="625.50" y="636.50" text-anchor="middle">10</text>
<text x="695.00" y="635.20" text-anchor="middle">0</text>
<text x="765.00" y="632.80" text-anchor="middle">-10</text>
<text x="833.75" y="631.40" text-anchor="middle">-20</text>
<text x="903.00" y="629.00" text-anchor="middle">-30</text>
</g>
<text x="654" y="648.800" font-size="12.900" fill="#262626" text-anchor="middle">X (m)</text>
<text transform="translate(442.800 402.500) rotate(-90)" font-size="12.900" fill="#262626" text-anchor="middle">Y (m)</text>
<g font-size="12.900" fill="#111" text-anchor="middle">
<text x="696.300" y="93.10" xml:space="preserve">TimeStamp: 1.18015 (sec)</text>
<text x="696.300" y="109.40" xml:space="preserve">Position [x,y,z]: -1.596, -37.200, 247.383 (m)</text>
<text x="696.300" y="126.10" xml:space="preserve">Ego Yaw: -91.26 (deg), Lane Heading: -181.45 (deg)</text>
<text x="696.300" y="142.50" xml:space="preserve">Lane number: before: 3, GT: 3</text>
<text x="696.300" y="159.10" xml:space="preserve">GT Lane Widths:  3.301 3.761 3.450 3.843</text>
<text x="696.300" y="179.00" xml:space="preserve">snr_025_HERE.rrscenario</text>
</g>
<rect x="636.500" y="659.500" width="120" height="30" fill="#fff" stroke="#2e2e2e" stroke-width="1"/>
<rect x="654.500" y="665.000" width="5" height="5" fill="none" stroke="#2222dd" stroke-width="1"/>
<rect x="654.500" y="679.500" width="5" height="5" fill="none" stroke="#e03a2a" stroke-width="1"/>
<g font-size="10.450" fill="#111"><text x="677" y="672.200">before</text><text x="677" y="686.100">after localization</text></g>
</svg>
<svg width="1200" height="733" viewBox="0 0 1200 733">
<rect x="992.0" y="157.5" width="156.0" height="519.0" fill="#fff"/>
<g stroke="#dedede" stroke-width="1" fill="none">
<path d="M1018.00 157.5 V676.5"/>
<path d="M1070.00 157.5 V676.5"/>
<path d="M1122.00 157.5 V676.5"/>
<path d="M992.0 624.55 H1148.0"/>
<path d="M992.0 572.61 H1148.0"/>
<path d="M992.0 520.67 H1148.0"/>
<path d="M992.0 468.73 H1148.0"/>
<path d="M992.0 416.79 H1148.0"/>
<path d="M992.0 364.85 H1148.0"/>
<path d="M992.0 312.91 H1148.0"/>
<path d="M992.0 260.97 H1148.0"/>
<path d="M992.0 209.03 H1148.0"/>
</g>
<g stroke="#e8505a" stroke-width="1.1" fill="none">
<path d="M1041.500 506 L1041.500 624.500"/>
<path d="M1060.200 370 L1060.500 624.500"/>
<path d="M1077.600 443 L1077.800 624.500"/>
<path d="M1093.000 157.500 L1096.800 624.500"/>
</g>
<rect x="1064.700" y="624.500" width="9.300" height="25" rx="1.2" fill="#2f86c9" stroke="#2a7abb" stroke-width="0.6"/>
<rect x="992.0" y="157.5" width="156.0" height="519.0" fill="none" stroke="#2e2e2e" stroke-width="1.1"/>
<g stroke="#2e2e2e" stroke-width="1.1" fill="none">
<path d="M992.0 624.55 h5 M1148.0 624.55 h-5"/>
<path d="M992.0 572.61 h5 M1148.0 572.61 h-5"/>
<path d="M992.0 520.67 h5 M1148.0 520.67 h-5"/>
<path d="M992.0 468.73 h5 M1148.0 468.73 h-5"/>
<path d="M992.0 416.79 h5 M1148.0 416.79 h-5"/>
<path d="M992.0 364.85 h5 M1148.0 364.85 h-5"/>
<path d="M992.0 312.91 h5 M1148.0 312.91 h-5"/>
<path d="M992.0 260.97 h5 M1148.0 260.97 h-5"/>
<path d="M992.0 209.03 h5 M1148.0 209.03 h-5"/>
<path d="M1018.00 676.5 v-5 M1018.00 157.5 v5"/>
<path d="M1070.00 676.5 v-5 M1070.00 157.5 v5"/>
<path d="M1122.00 676.5 v-5 M1122.00 157.5 v5"/>
</g>
<g font-size="11.300" fill="#262626">
<text x="987.500" y="680.69" text-anchor="end">-10</text>
<text x="987.500" y="628.75" text-anchor="end">0</text>
<text x="987.500" y="576.81" text-anchor="end">10</text>
<text x="987.500" y="524.87" text-anchor="end">20</text>
<text x="987.500" y="472.93" text-anchor="end">30</text>
<text x="987.500" y="420.99" text-anchor="end">40</text>
<text x="987.500" y="369.05" text-anchor="end">50</text>
<text x="987.500" y="317.11" text-anchor="end">60</text>
<text x="987.500" y="265.17" text-anchor="end">70</text>
<text x="987.500" y="213.23" text-anchor="end">80</text>
<text x="987.500" y="161.29" text-anchor="end">90</text>
<text x="1016.50" y="692.700" text-anchor="middle">-10</text>
<text x="1070.00" y="692.700" text-anchor="middle">0</text>
<text x="1122.00" y="692.700" text-anchor="middle">10</text>
</g>
<text x="1069.500" y="709.300" font-size="12.200" fill="#262626" text-anchor="middle">Y (m)</text>
<text transform="translate(965.500 417.500) rotate(-90)" font-size="12.200" fill="#262626" text-anchor="middle">X (m)</text>
<g font-size="12.200" fill="#111" text-anchor="middle">
<text x="1069.600" y="103.70">Offset: -0.035 (m)</text>
<text x="1069.600" y="119.50">Adjused Offset: -0.031 (m)</text>
<text x="1069.600" y="135.50">Ego Lane Width: 3.361 (m)</text>
<text x="1069.600" y="151.10">GT Lane Width: 3.450 (m)</text>
</g></svg>
</body>
</html>
